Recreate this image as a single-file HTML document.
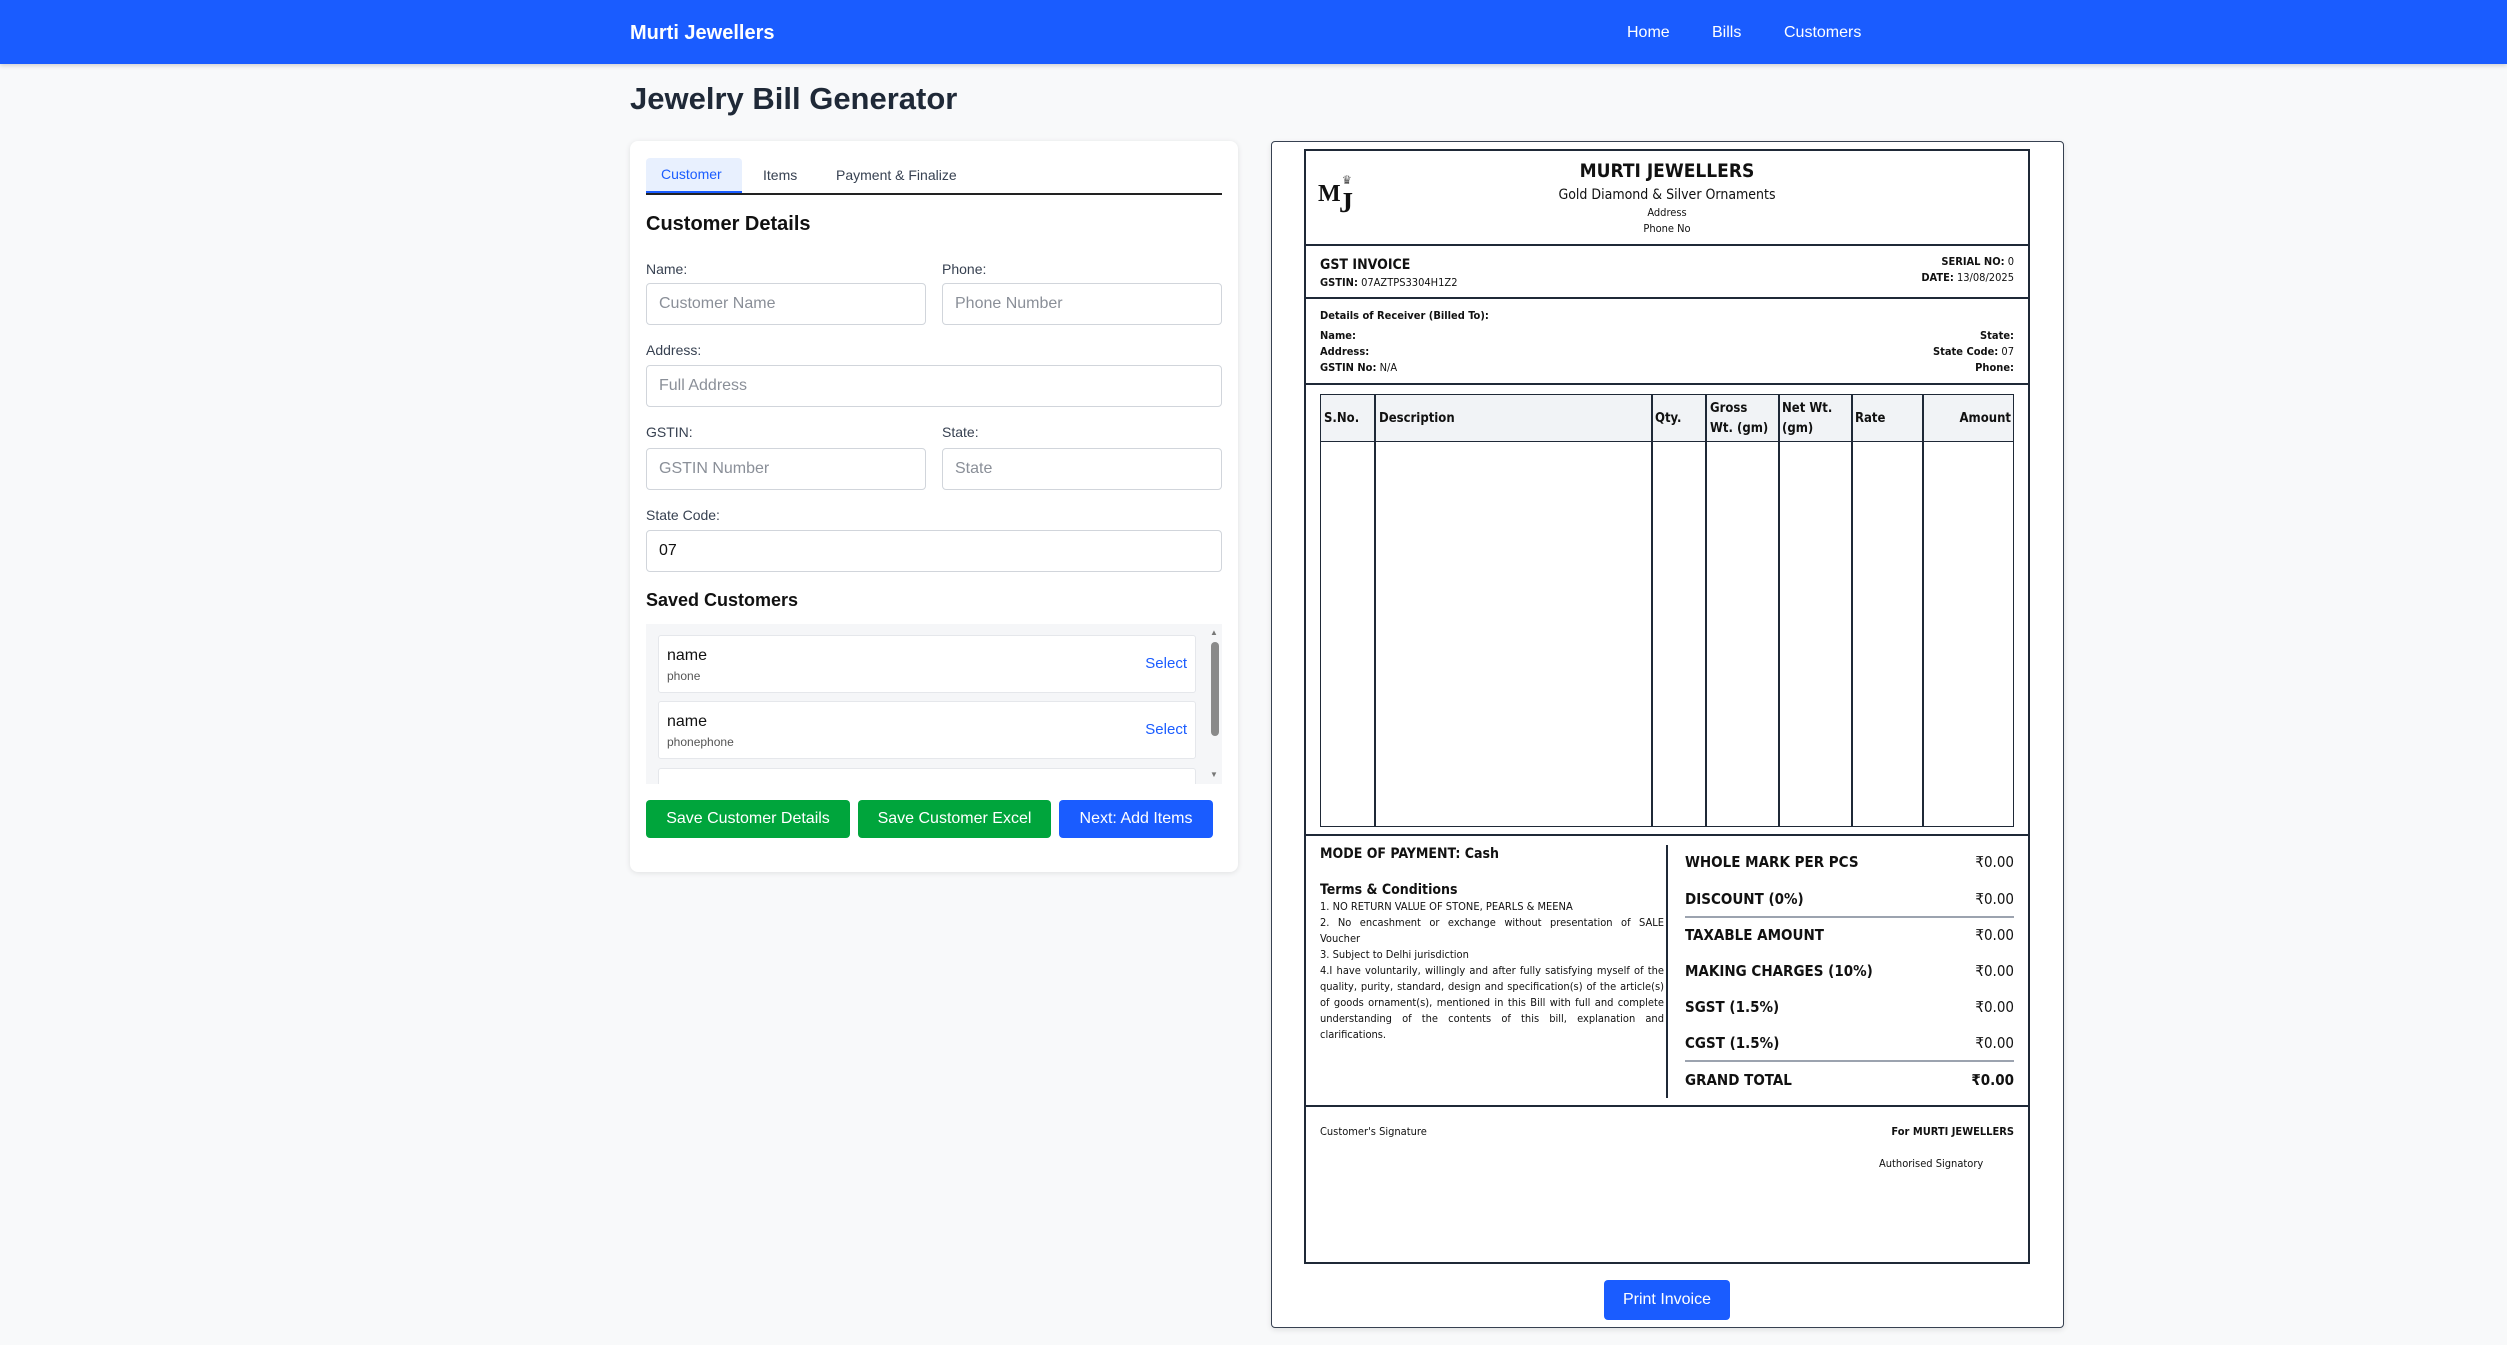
<!DOCTYPE html>
<html><head><meta charset="utf-8">
<style>
*{box-sizing:border-box;margin:0;padding:0}
body{width:2507px;height:1345px;background:#f8f9fa;font-family:"Liberation Sans",sans-serif;position:relative;overflow:hidden;color:#111}
.a{position:absolute;white-space:nowrap}
.nav{position:absolute;left:0;top:0;width:2507px;height:64px;background:#1a5cff;box-shadow:0 2px 4px rgba(0,0,0,.15)}
.nav .a{color:#fff;font-size:16px;top:24px}
.card{position:absolute;left:630px;top:141px;width:608px;height:731px;background:#fff;border-radius:8px;box-shadow:0 1px 6px rgba(0,0,0,.1)}
.lbl{font-size:14px;color:#374151}
.inp{position:absolute;height:42px;border:1px solid #d1d5db;border-radius:4px;background:#fff;font-size:16px;color:#8a8f98;padding:11px 12px}
.btn{position:absolute;height:38px;border-radius:4px;color:#fff;font-size:16px;text-align:center;line-height:38px}
.inv{font-family:"Liberation Sans Narrow","DejaVu Sans Condensed","Liberation Sans",sans-serif;color:#111}
.hl{position:absolute;left:1304px;width:726px;height:2px;background:#1f2937}
.vl{position:absolute;width:1.5px;background:#1f2937}
.tr{position:absolute;left:1685px;width:329px;font-size:15px;font-weight:bold}
.tr span{position:absolute;right:0;font-weight:normal}
</style></head><body>
<div class="nav">
<div class="a" style="left:630px;top:22px;font-size:20px;font-weight:bold;color:#fff">Murti Jewellers</div>
<div class="a" style="left:1627px">Home</div>
<div class="a" style="left:1712px">Bills</div>
<div class="a" style="left:1784px">Customers</div>
</div>
<div class="a" style="left:630px;top:81px;font-size:31px;font-weight:bold;color:#1f2937">Jewelry Bill Generator</div>

<div class="card"></div>
<div class="a" style="left:646px;top:158px;width:96px;height:36px;background:#e8f0fe;border-bottom:3px solid #1a5cff;border-radius:4px 4px 0 0"></div>
<div class="a" style="left:646px;top:193px;width:576px;height:2px;background:#222"></div>
<div class="a" style="left:661px;top:166px;font-size:14px;color:#1a5cff">Customer</div>
<div class="a" style="left:763px;top:167px;font-size:14px;color:#374151">Items</div>
<div class="a" style="left:836px;top:167px;font-size:14px;color:#374151">Payment &amp; Finalize</div>
<div class="a" style="left:646px;top:213px;font-size:20px;font-weight:bold">Customer Details</div>
<div class="a lbl" style="left:646px;top:261px">Name:</div>
<div class="a lbl" style="left:942px;top:261px">Phone:</div>
<div class="inp" style="left:646px;top:283px;width:280px">Customer Name</div>
<div class="inp" style="left:942px;top:283px;width:280px">Phone Number</div>
<div class="a lbl" style="left:646px;top:342px">Address:</div>
<div class="inp" style="left:646px;top:365px;width:576px">Full Address</div>
<div class="a lbl" style="left:646px;top:424px">GSTIN:</div>
<div class="a lbl" style="left:942px;top:424px">State:</div>
<div class="inp" style="left:646px;top:448px;width:280px">GSTIN Number</div>
<div class="inp" style="left:942px;top:448px;width:280px">State</div>
<div class="a lbl" style="left:646px;top:507px">State Code:</div>
<div class="inp" style="left:646px;top:530px;width:576px;color:#111">07</div>
<div class="a" style="left:646px;top:590px;font-size:18px;font-weight:bold">Saved Customers</div>
<div class="a" style="left:646px;top:624px;width:576px;height:160px;background:#f5f6f8;overflow:hidden">
 <div class="a" style="left:12px;top:11px;width:538px;height:58px;background:#fff;border:1px solid #e5e7eb;border-radius:3px">
  <div class="a" style="left:8px;top:11px;font-size:16px">name</div>
  <div class="a" style="left:8px;top:33px;font-size:12px;color:#555">phone</div>
  <div class="a" style="right:8px;top:19px;font-size:15px;color:#1a5cff">Select</div></div>
 <div class="a" style="left:12px;top:77px;width:538px;height:58px;background:#fff;border:1px solid #e5e7eb;border-radius:3px">
  <div class="a" style="left:8px;top:11px;font-size:16px">name</div>
  <div class="a" style="left:8px;top:33px;font-size:12px;color:#555">phonephone</div>
  <div class="a" style="right:8px;top:19px;font-size:15px;color:#1a5cff">Select</div></div>
 <div class="a" style="left:12px;top:144px;width:538px;height:58px;background:#fff;border:1px solid #e5e7eb;border-radius:3px"></div>
 <div class="a" style="left:565px;top:18px;width:8px;height:94px;background:#8a8a8a;border-radius:4px"></div>
 <div class="a" style="left:564px;top:4px;font-size:8px;color:#777">▲</div>
 <div class="a" style="left:564px;top:146px;font-size:8px;color:#777">▼</div>
</div>
<div class="btn" style="left:646px;top:800px;width:204px;background:#00a53c">Save Customer Details</div>
<div class="btn" style="left:858px;top:800px;width:193px;background:#00a53c">Save Customer Excel</div>
<div class="btn" style="left:1059px;top:800px;width:154px;background:#1a5cff">Next: Add Items</div>

<!-- invoice -->
<div class="a" style="left:1271px;top:141px;width:793px;height:1187px;background:#fff;border:1.5px solid #374151;border-radius:4px;box-shadow:0 2px 6px rgba(0,0,0,.1)"></div>
<div class="a inv" style="left:1304px;top:149px;width:726px;height:1115px;border:2px solid #1f2937"></div>
<div class="inv">
<div class="a" style="left:1318px;top:181px;font-family:'Liberation Serif',serif;font-size:24px;font-weight:bold">M</div>
<div class="a" style="left:1339px;top:188px;font-family:'Liberation Serif',serif;font-size:28px;font-weight:bold">J</div>
<div class="a" style="left:1342px;top:173px;font-size:12px;color:#555">♛</div>
<div class="a" style="left:1304px;top:160px;width:726px;text-align:center;font-size:19px;font-weight:bold">MURTI JEWELLERS</div>
<div class="a" style="left:1304px;top:187px;width:726px;text-align:center;font-size:14px">Gold Diamond &amp; Silver Ornaments</div>
<div class="a" style="left:1304px;top:206px;width:726px;text-align:center;font-size:11px">Address</div>
<div class="a" style="left:1304px;top:222px;width:726px;text-align:center;font-size:11px">Phone No</div>
<div class="hl" style="top:244px"></div>
<div class="a" style="left:1320px;top:257px;font-size:14px;font-weight:bold">GST INVOICE</div>
<div class="a" style="left:1320px;top:276px;font-size:11px"><b>GSTIN:</b> 07AZTPS3304H1Z2</div>
<div class="a" style="right:493px;top:255px;font-size:11px"><b>SERIAL NO:</b> 0</div>
<div class="a" style="right:493px;top:271px;font-size:11px"><b>DATE:</b> 13/08/2025</div>
<div class="hl" style="top:297px"></div>
<div class="a" style="left:1320px;top:309px;font-size:11px;font-weight:bold">Details of Receiver (Billed To):</div>
<div class="a" style="left:1320px;top:329px;font-size:11px;font-weight:bold">Name:</div>
<div class="a" style="left:1320px;top:345px;font-size:11px;font-weight:bold">Address:</div>
<div class="a" style="left:1320px;top:361px;font-size:11px"><b>GSTIN No:</b> N/A</div>
<div class="a" style="right:493px;top:329px;font-size:11px;font-weight:bold">State:</div>
<div class="a" style="right:493px;top:345px;font-size:11px"><b>State Code:</b> 07</div>
<div class="a" style="right:493px;top:361px;font-size:11px;font-weight:bold">Phone:</div>
<div class="hl" style="top:383px"></div>
<div class="a" style="left:1320px;top:394px;width:694px;height:433px;border:1.5px solid #1f2937"></div>
<div class="a" style="left:1321px;top:395px;width:692px;height:47px;background:#f1f3f6;border-bottom:1.5px solid #1f2937"></div>
<div class="vl" style="left:1374px;top:394px;height:433px"></div>
<div class="vl" style="left:1651px;top:394px;height:433px"></div>
<div class="vl" style="left:1705px;top:394px;height:433px"></div>
<div class="vl" style="left:1778px;top:394px;height:433px"></div>
<div class="vl" style="left:1851px;top:394px;height:433px"></div>
<div class="vl" style="left:1922px;top:394px;height:433px"></div>
<div class="a" style="left:1324px;top:411px;font-size:13px;font-weight:bold">S.No.</div>
<div class="a" style="left:1379px;top:411px;font-size:13px;font-weight:bold">Description</div>
<div class="a" style="left:1655px;top:411px;font-size:13px;font-weight:bold">Qty.</div>
<div class="a" style="left:1710px;top:399px;font-size:13px;font-weight:bold;line-height:20px">Gross<br>Wt. (gm)</div>
<div class="a" style="left:1782px;top:399px;font-size:13px;font-weight:bold;line-height:20px">Net Wt.<br>(gm)</div>
<div class="a" style="left:1855px;top:411px;font-size:13px;font-weight:bold">Rate</div>
<div class="a" style="right:496px;top:411px;font-size:13px;font-weight:bold">Amount</div>
<div class="hl" style="top:834px"></div>
<div class="vl" style="left:1666px;top:845px;height:253px"></div>
<div class="a" style="left:1320px;top:846px;font-size:14px;font-weight:bold">MODE OF PAYMENT: Cash</div>
<div class="a" style="left:1320px;top:882px;font-size:14px;font-weight:bold">Terms &amp; Conditions</div>
<div class="a" style="left:1320px;top:899px;width:344px;font-size:11px;line-height:16px;white-space:normal;text-align:justify">1. NO RETURN VALUE OF STONE, PEARLS &amp; MEENA<br>2. No encashment or exchange without presentation of SALE Voucher<br>3. Subject to Delhi jurisdiction<br>4.I have voluntarily, willingly and after fully satisfying myself of the quality, purity, standard, design and specification(s) of the article(s) of goods ornament(s), mentioned in this Bill with full and complete understanding of the contents of this bill, explanation and clarifications.</div>
<div class="tr" style="top:853px">WHOLE MARK PER PCS<span>₹0.00</span></div>
<div class="tr" style="top:890px">DISCOUNT (0%)<span>₹0.00</span></div>
<div class="a" style="left:1685px;top:916px;width:329px;height:1.5px;background:#9ca3af"></div>
<div class="tr" style="top:926px">TAXABLE AMOUNT<span>₹0.00</span></div>
<div class="tr" style="top:962px">MAKING CHARGES (10%)<span>₹0.00</span></div>
<div class="tr" style="top:998px">SGST (1.5%)<span>₹0.00</span></div>
<div class="tr" style="top:1034px">CGST (1.5%)<span>₹0.00</span></div>
<div class="a" style="left:1685px;top:1060px;width:329px;height:1.5px;background:#9ca3af"></div>
<div class="tr" style="top:1071px">GRAND TOTAL<span style="font-weight:bold">₹0.00</span></div>
<div class="hl" style="top:1105px"></div>
<div class="a" style="left:1320px;top:1125px;font-size:11px">Customer's Signature</div>
<div class="a" style="right:493px;top:1125px;font-size:11px;font-weight:bold">For MURTI JEWELLERS</div>
<div class="a" style="left:1879px;top:1157px;font-size:11px">Authorised Signatory</div>
</div>
<div class="btn" style="left:1604px;top:1280px;width:126px;height:40px;line-height:40px;background:#1a5cff">Print Invoice</div>
</body></html>
